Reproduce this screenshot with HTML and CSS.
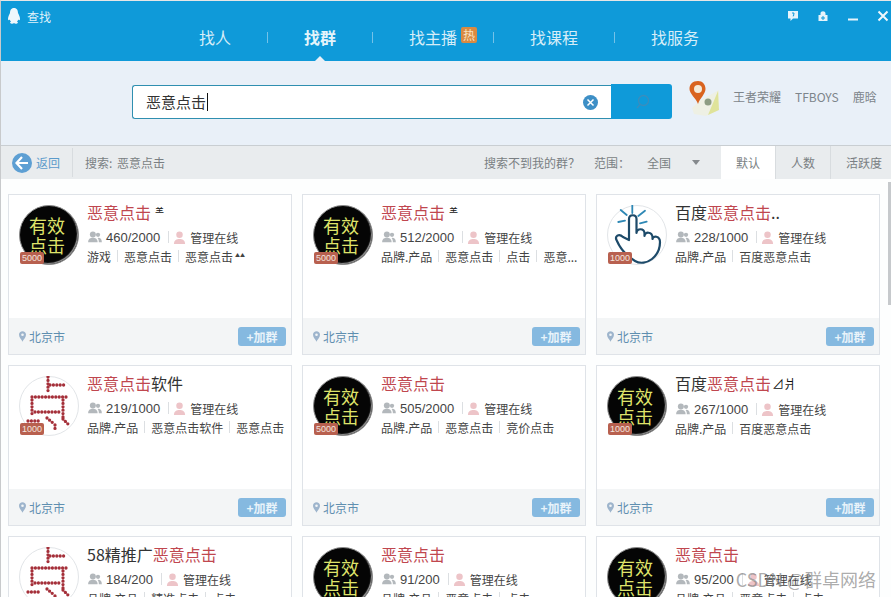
FILE: index.html
```html
<!DOCTYPE html>
<html lang="zh-CN">
<head>
  <meta charset="UTF-8">
  <title>查找</title>
  <link rel="stylesheet" href="styles.css">
</head>
<body>
  <div class="window">
    <header class="topbar">
      <div class="titlebar">
        <div class="app-title">
          <svg class="penguin" width="14" height="16" viewBox="0 0 14 16"><path d="M7 0C4 0 3 2.500 3 5C2 7 1 9 1 11C1 12.500 2 12.500 2.800 11.500C3 12.500 3.500 13 4 13.500C3 14 2.500 15 4 15.500C5.500 16 6.500 15.500 7 15C7.500 15.500 8.500 16 10 15.500C11.500 15 11 14 10 13.500C10.500 13 11 12.500 11.200 11.500C12 12.500 13 12.500 13 11C13 9 12 7 11 5C11 2.500 10 0 7 0Z" fill="#eef7fc"/></svg>
          <span>查找</span>
        </div>
        <div class="win-controls">
          <svg width="12" height="12" viewBox="0 0 12 12"><path d="M1 1H11V8.500H6L3.500 11V8.500H1Z" fill="#e6f4fb"/><path d="M5 3H7L6.500 6H5.800" fill="none" stroke="#0f9ad9" stroke-width="1"/></svg>
          <svg width="12" height="12" viewBox="0 0 12 12"><path d="M3.500 5V3.500C3.500 0.500 8.500 0.500 8.500 3.500V5H10.500V11H1.500V5Z" fill="#e6f4fb"/><path d="M4 8H8M6 6V10" stroke="#0f9ad9" stroke-width="1"/></svg>
          <svg width="12" height="12" viewBox="0 0 12 12"><path d="M1 9.500H11" stroke="#e6f4fb" stroke-width="2"/></svg>
          <svg width="12" height="12" viewBox="0 0 12 12"><path d="M1.500 1.500L10.500 10.500M10.500 1.500L1.500 10.500" stroke="#eef7fc" stroke-width="2"/></svg>
        </div>
      </div>
      <nav class="tabs">
        <a class="tab">找人</a>
        <i class="tab-sep"></i>
        <a class="tab tab-active">找群</a>
        <i class="tab-sep"></i>
        <a class="tab">找主播<b class="hot">热</b></a>
        <i class="tab-sep"></i>
        <a class="tab">找课程</a>
        <i class="tab-sep"></i>
        <a class="tab">找服务</a>
      </nav>
    </header>

    <section class="search-area">
      <div class="search-box">
        <div class="search-input">
          <span class="query">恶意点击</span>
          <svg class="clear" width="15" height="15" viewBox="0 0 15 15"><circle cx="7.500" cy="7.500" r="7.500" fill="#3d8fc6"/><path d="M4.500 4.500L10.500 10.500M10.500 4.500L4.500 10.500" stroke="#fff" stroke-width="1.500"/></svg>
        </div>
        <button class="search-btn">
          <svg width="16" height="16" viewBox="0 0 16 16"><circle cx="9.500" cy="6.500" r="5" fill="none" stroke="#3a8dbd" stroke-width="1.300"/><path d="M6 10.500L3 14" stroke="#3a8dbd" stroke-width="1.300"/></svg>
        </button>
      </div>
      <svg class="map-icon" width="32" height="36" viewBox="0 0 32 36">
        <path d="M3 27L12 19L30 9L29 29L17 35L5 33Z" fill="#eef0e4"/>
        <path d="M19 34L29 10L30 29Z" fill="#dfe39a"/>
        <circle cx="19" cy="21" r="3.500" fill="#8d9c83"/>
        <path d="M9 0C3.500 0 0.500 3.500 0.500 8C0.500 13 7 17 9 23C11 17 16.500 13 16.500 8C16.500 3.500 13.500 0 9 0Z" fill="#d9631f"/>
        <circle cx="9" cy="8" r="4" fill="#f4ead9"/>
      </svg>
      <div class="hot-words">
        <a>王者荣耀</a>
        <a>TFBOYS</a>
        <a>鹿晗</a>
      </div>
    </section>

    <section class="toolbar">
      <a class="back">
        <svg width="20" height="20" viewBox="0 0 20 20"><circle cx="10" cy="10" r="10" fill="#5d9fd3"/><path d="M10 4L4.500 10L10 16M5 10H16" fill="none" stroke="#fff" stroke-width="2.200"/></svg>
        <span>返回</span>
      </a>
      <span class="crumb">搜索: 恶意点击</span>
      <span class="not-found">搜索不到我的群？</span>
      <span class="range">范围：</span>
      <span class="range-value">全国</span>
      <i class="caret"></i>
      <div class="sorts">
        <a class="sort sort-active">默认</a>
        <a class="sort">人数</a>
        <a class="sort">活跃度</a>
      </div>
    </section>

    <main class="results">
      <article class="card">
        <div class="card-body">
          <div class="avatar avatar-dark"><span>有效<br>点击</span><em class="level">5000</em></div>
          <div class="info">
            <h3><mark>恶意点击</mark><small>⺷</small></h3>
            <p class="stats"><svg class="ic-members" viewBox="0 0 16 14"><use href="#members"/></svg><span class="count">460/2000</span><i class="bar"></i><svg class="ic-admin" viewBox="0 0 14 14"><use href="#admin"/></svg>管理在线</p>
            <p class="tags">游戏<i class="bar"></i>恶意点击<i class="bar"></i>恶意点击<small>▲▲</small></p>
          </div>
        </div>
        <div class="card-foot"><span class="city"><svg class="ic-pin" viewBox="0 0 8 12"><use href="#pin"/></svg>北京市</span><button class="join">+加群</button></div>
      </article>

      <article class="card">
        <div class="card-body">
          <div class="avatar avatar-dark"><span>有效<br>点击</span><em class="level">5000</em></div>
          <div class="info">
            <h3><mark>恶意点击</mark><small>⺷</small></h3>
            <p class="stats"><svg class="ic-members" viewBox="0 0 16 14"><use href="#members"/></svg><span class="count">512/2000</span><i class="bar"></i><svg class="ic-admin" viewBox="0 0 14 14"><use href="#admin"/></svg>管理在线</p>
            <p class="tags">品牌.产品<i class="bar"></i>恶意点击<i class="bar"></i>点击<i class="bar"></i>恶意...</p>
          </div>
        </div>
        <div class="card-foot"><span class="city"><svg class="ic-pin" viewBox="0 0 8 12"><use href="#pin"/></svg>北京市</span><button class="join">+加群</button></div>
      </article>

      <article class="card">
        <div class="card-body">
          <div class="avatar avatar-hand">
            <svg width="60" height="60" viewBox="0 0 60 60"><use href="#hand"/></svg>
            <em class="level">1000</em>
          </div>
          <div class="info">
            <h3>百度<mark>恶意点击</mark>..</h3>
            <p class="stats"><svg class="ic-members" viewBox="0 0 16 14"><use href="#members"/></svg><span class="count">228/1000</span><i class="bar"></i><svg class="ic-admin" viewBox="0 0 14 14"><use href="#admin"/></svg>管理在线</p>
            <p class="tags">品牌.产品<i class="bar"></i>百度恶意点击</p>
          </div>
        </div>
        <div class="card-foot"><span class="city"><svg class="ic-pin" viewBox="0 0 8 12"><use href="#pin"/></svg>北京市</span><button class="join">+加群</button></div>
      </article>

      <article class="card">
        <div class="card-body">
          <div class="avatar avatar-dots">
            <svg width="60" height="60" viewBox="0 0 60 60"><use href="#dots"/></svg>
            <em class="level">1000</em>
          </div>
          <div class="info">
            <h3><mark>恶意点击</mark>软件</h3>
            <p class="stats"><svg class="ic-members" viewBox="0 0 16 14"><use href="#members"/></svg><span class="count">219/1000</span><i class="bar"></i><svg class="ic-admin" viewBox="0 0 14 14"><use href="#admin"/></svg>管理在线</p>
            <p class="tags">品牌.产品<i class="bar"></i>恶意点击软件<i class="bar"></i>恶意点击</p>
          </div>
        </div>
        <div class="card-foot"><span class="city"><svg class="ic-pin" viewBox="0 0 8 12"><use href="#pin"/></svg>北京市</span><button class="join">+加群</button></div>
      </article>

      <article class="card">
        <div class="card-body">
          <div class="avatar avatar-dark"><span>有效<br>点击</span><em class="level">5000</em></div>
          <div class="info">
            <h3><mark>恶意点击</mark></h3>
            <p class="stats"><svg class="ic-members" viewBox="0 0 16 14"><use href="#members"/></svg><span class="count">505/2000</span><i class="bar"></i><svg class="ic-admin" viewBox="0 0 14 14"><use href="#admin"/></svg>管理在线</p>
            <p class="tags">品牌.产品<i class="bar"></i>恶意点击<i class="bar"></i>竞价点击</p>
          </div>
        </div>
        <div class="card-foot"><span class="city"><svg class="ic-pin" viewBox="0 0 8 12"><use href="#pin"/></svg>北京市</span><button class="join">+加群</button></div>
      </article>

      <article class="card">
        <div class="card-body">
          <div class="avatar avatar-dark"><span>有效<br>点击</span><em class="level">1000</em></div>
          <div class="info">
            <h3>百度<mark>恶意点击</mark><small class="odd">⊿爿</small></h3>
            <p class="stats"><svg class="ic-members" viewBox="0 0 16 14"><use href="#members"/></svg><span class="count">267/1000</span><i class="bar"></i><svg class="ic-admin" viewBox="0 0 14 14"><use href="#admin"/></svg>管理在线</p>
            <p class="tags">品牌.产品<i class="bar"></i>百度恶意点击</p>
          </div>
        </div>
        <div class="card-foot"><span class="city"><svg class="ic-pin" viewBox="0 0 8 12"><use href="#pin"/></svg>北京市</span><button class="join">+加群</button></div>
      </article>

      <article class="card">
        <div class="card-body">
          <div class="avatar avatar-dots">
            <svg width="60" height="60" viewBox="0 0 60 60"><use href="#dots"/></svg>
          </div>
          <div class="info">
            <h3>58精推广<mark>恶意点击</mark></h3>
            <p class="stats"><svg class="ic-members" viewBox="0 0 16 14"><use href="#members"/></svg><span class="count">184/200</span><i class="bar"></i><svg class="ic-admin" viewBox="0 0 14 14"><use href="#admin"/></svg>管理在线</p>
            <p class="tags">品牌.产品<i class="bar"></i>精准点击<i class="bar"></i>点击</p>
          </div>
        </div>
      </article>

      <article class="card">
        <div class="card-body">
          <div class="avatar avatar-dark"><span>有效<br>点击</span></div>
          <div class="info">
            <h3><mark>恶意点击</mark></h3>
            <p class="stats"><svg class="ic-members" viewBox="0 0 16 14"><use href="#members"/></svg><span class="count">91/200</span><i class="bar"></i><svg class="ic-admin" viewBox="0 0 14 14"><use href="#admin"/></svg>管理在线</p>
            <p class="tags">品牌.产品<i class="bar"></i>恶意点击<i class="bar"></i>点击</p>
          </div>
        </div>
      </article>

      <article class="card">
        <div class="card-body">
          <div class="avatar avatar-dark"><span>有效<br>点击</span></div>
          <div class="info">
            <h3><mark>恶意点击</mark></h3>
            <p class="stats"><svg class="ic-members" viewBox="0 0 16 14"><use href="#members"/></svg><span class="count">95/200</span><i class="bar"></i><svg class="ic-admin" viewBox="0 0 14 14"><use href="#admin"/></svg>管理在线</p>
            <p class="tags">品牌.产品<i class="bar"></i>恶意点击<i class="bar"></i>点击</p>
          </div>
        </div>
      </article>
    </main>

    <div class="scroll-thumb"></div>
    <span class="watermark">CSDN @群卓网络</span>
  </div>

  <!-- shared icons -->
  <svg class="defs" width="0" height="0">
    <defs>
      <g id="members" fill="#b3b8bc">
        <circle cx="5.500" cy="4" r="3.500"/><path d="M0 13C0 9 3 8 5.500 8C8 8 11 9 11 13Z"/>
        <circle cx="11.500" cy="4.500" r="2.500"/><path d="M12 8C14 8 16 9.500 16 13H12.500C12.500 11 12 9 11 8.500Z"/>
      </g>
      <g id="admin" fill="#edc4c8">
        <circle cx="7" cy="4" r="3.500"/><path d="M1 14C1 9.500 4 8.500 7 8.500C10 8.500 13 9.500 13 14Z"/>
      </g>
      <path id="pin" fill="#9db4cc" d="M4 0C1.800 0 0 1.700 0 4C0 7 3 9.500 4 12C5 9.500 8 7 8 4C8 1.700 6.200 0 4 0ZM4 2.500A1.500 1.500 0 1 1 4 5.500A1.500 1.500 0 0 1 4 2.500Z" fill-rule="evenodd"/>
      <g id="hand">
        <path d="M22 35V14C22 9 29.500 9 29.500 14V28C30 23 37 23 37.500 28V31C38 26 45 27 45.500 32V34C46 30 53 31 53 37C53 45 50 50 45 54C40 58 33 59 28 56C20 51 13 43 10 36C7 31 12 28 16 32Z" fill="#fff" stroke="#1d4a69" stroke-width="2.200" stroke-linecap="round" stroke-linejoin="round"/>
        <path d="M25.300 0V8M13.700 5L19.700 10M11.300 17L18 15.700M38 5.700L31.300 11M39.700 16.700L33 18.300" stroke="#2e88b5" stroke-width="1.800" stroke-linecap="round"/>
      </g>
      <g id="dots" fill="none" stroke="#a5303a" stroke-width="3.300" stroke-linecap="round" stroke-dasharray="0 3.400">
        <path d="M29 1V18"/>
        <path d="M31 9H48"/>
        <path d="M13 21H48"/>
        <path d="M13 24V39"/>
        <path d="M44 24V44"/>
        <path d="M16 36H42"/>
        <path d="M28 42L34 47"/>
        <path d="M36 49V55"/>
        <path d="M44 43L50 49"/>
        <path d="M9 45H21"/>
      </g>
    </defs>
  </svg>
</body>
</html>
```

FILE: styles.css
```css
* {
  box-sizing: border-box;
}
html, body {
  margin: 0;
  height: 100%;
  overflow: hidden;
}
body {
  font-family: "Noto Sans CJK SC", "Liberation Sans", sans-serif;
  color: #333;
  background: #fff;
}
a {
  text-decoration: none;
}
.window {
  position: relative;
  width: 891px;
  height: 597px;
  overflow: hidden;
  background: #fdfefe;
  border-top: 1px solid #e6e6e6;
  border-left: 1px solid #c8cacc;
}
.defs {
  position: absolute;
}

/* blue header */
.topbar {
  height: 60px;
  background: #0f9ad9;
  color: #dff1fa;
}
.titlebar {
  display: flex;
  justify-content: space-between;
  height: 23px;
  padding: 7px 2px 0 6px;
}
.app-title {
  display: flex;
  align-items: center;
  gap: 6px;
  height: 16px;
  font-size: 12px;
}
.win-controls {
  display: flex;
  gap: 18px;
  padding-top: 2px;
}
.tabs {
  display: flex;
  align-items: center;
  height: 26px;
  margin-left: 198px;
  font-size: 16px;
}
.tab {
  position: relative;
  color: #d6edf8;
}
.tab-active {
  font-weight: bold;
  color: #e4f4fb;
}
.tab-active::after {
  content: "";
  position: absolute;
  left: 50%;
  bottom: -13px;
  margin-left: -6px;
  border: 6px solid transparent;
  border-top: 0;
  border-bottom-color: #e9f0f8;
}
.tab-sep {
  width: 1px;
  height: 11px;
  margin: 0 36px;
  background: #74c2e8;
}
.hot {
  position: absolute;
  top: 2px;
  right: -20px;
  width: 16px;
  height: 16px;
  border-radius: 2px;
  font-size: 12px;
  font-weight: normal;
  line-height: 16px;
  text-align: center;
  color: #f7e3c2;
  background: #d98a42;
}

/* search row */
.search-area {
  display: flex;
  align-items: flex-start;
  height: 84px;
  padding: 24px 0 0 131px;
  background: #e9f0f8;
}
.search-box {
  display: flex;
  width: 540px;
  height: 34px;
}
.search-input {
  display: flex;
  align-items: center;
  justify-content: space-between;
  width: 479px;
  padding: 0 13px;
  background: #fff;
  border: 1px solid #2f8fb0;
  border-right: 0;
  border-radius: 3px 0 0 3px;
}
.query {
  padding-right: 1px;
  font-size: 15px;
  color: #333;
  border-right: 1px solid #111;
  line-height: 18px;
}
.search-btn {
  display: flex;
  align-items: center;
  justify-content: center;
  width: 61px;
  height: 35px;
  margin-top: -1px;
  padding: 0;
  border: 0;
  border-radius: 0 3px 3px 0;
  background: #0f9ad9;
}
.map-icon {
  margin: -4px 0 0 17px;
}
.hot-words {
  display: flex;
  gap: 14px;
  margin: 4px 0 0 12px;
  font-size: 12px;
  line-height: 16px;
}
.hot-words a {
  color: #7d858b;
}

/* back / sort bar */
.toolbar {
  display: flex;
  align-items: center;
  height: 34px;
  padding-left: 11px;
  font-size: 12px;
  white-space: nowrap;
  color: #7a7f83;
  background: #e9ecee;
  border-top: 1px solid #c9ced2;
}
.toolbar > * {
  flex: none;
}
.back {
  display: flex;
  align-items: center;
  gap: 4px;
  width: 61px;
  height: 29px;
  color: #5b9bcb;
  border-right: 1px solid #d8dcdf;
}
.crumb {
  margin-left: 12px;
  width: 399px;
  word-spacing: 2px;
}
.not-found, .range {
  font-family: "Noto Sans CJK TC", "Liberation Sans", sans-serif;
}
.range {
  margin-left: 14px;
}
.range-value {
  margin-left: 17px;
}
.caret {
  width: 0;
  margin-left: 21px;
  border: 4.500px solid transparent;
  border-top: 5px solid #85898d;
  border-bottom: 0;
}
.sorts {
  display: flex;
  align-self: stretch;
  margin-left: 21px;
}
.sort {
  display: flex;
  flex: none;
  align-items: center;
  padding: 0 15px;
  color: #7a7f83;
  border-right: 1px solid #d8dcdf;
}
.sort-active {
  background: #fff;
}

/* result cards */
.results {
  display: grid;
  grid-template-columns: repeat(3, 284px);
  grid-auto-rows: 161px;
  column-gap: 10px;
  row-gap: 10px;
  padding: 15px 0 0 7px;
}
.card {
  display: flex;
  flex-direction: column;
  background: #fff;
  border: 1px solid #dfe3e8;
}
.card-body {
  display: flex;
  flex: 1;
  padding: 10px 0 0 10px;
}
.avatar {
  position: relative;
  flex: none;
  width: 60px;
  height: 60px;
  border-radius: 50%;
}
.avatar-dark {
  display: flex;
  align-items: center;
  justify-content: center;
  padding-right: 4px;
  text-align: center;
  font-size: 18px;
  line-height: 20px;
  color: #dfe36a;
  background: #050505;
  border: 1px solid #8a8a8a;
  box-shadow: inset -1px -1px 1px #9a9a9a;
}
.avatar-hand, .avatar-dots {
  background: #fff;
  border: 1px solid #e2e5e8;
}
.avatar-hand svg, .avatar-dots svg {
  position: absolute;
  top: -1px;
  left: -1px;
}
.level {
  position: absolute;
  left: 0;
  bottom: 0;
  width: 24px;
  height: 12px;
  border-radius: 2px;
  font-family: "Liberation Sans", sans-serif;
  font-size: 9px;
  font-style: normal;
  line-height: 12px;
  text-align: center;
  color: #f3e5df;
  background: #b8604f;
}
.info {
  min-width: 0;
  margin-left: 8px;
}
.info h3 {
  margin: -1px 0 0;
  font-size: 16px;
  font-weight: normal;
  line-height: 16px;
  color: #333;
  white-space: nowrap;
}
.info h3 small {
  margin-left: 4px;
  font-size: 9px;
  color: #111;
  vertical-align: 4px;
}
.info h3 .odd {
  margin-left: 1px;
  font-size: 12px;
  vertical-align: 1px;
}
mark {
  color: #c0474f;
  background: none;
}
.stats, .tags {
  display: flex;
  align-items: center;
  margin: 0;
  font-size: 12px;
  white-space: nowrap;
  color: #444;
}
.stats {
  height: 18px;
  margin-top: 8px;
}
.tags {
  height: 18px;
  margin-top: 1px;
}
.tags small {
  margin: -3px 0 0 2px;
  font-size: 5px;
}
.count {
  font-family: "Liberation Sans", sans-serif;
  font-size: 13px;
}
.ic-members {
  width: 14px;
  height: 12px;
  margin: 0 4px 0 1px;
}
.ic-admin {
  width: 13px;
  height: 13px;
  margin-right: 4px;
}
.bar {
  width: 1px;
  height: 12px;
  margin: 0 6px;
  background: #dcdfe2;
}
.stats .bar {
  margin: 0 4px 0 8px;
}
.card-foot {
  display: flex;
  align-items: center;
  justify-content: space-between;
  height: 36px;
  padding: 0 5px 0 10px;
  background: #f3f5f6;
}
.city {
  display: flex;
  align-items: center;
  gap: 3px;
  font-size: 12px;
  color: #5f8fb0;
}
.ic-pin {
  width: 7px;
  height: 11px;
}
.join {
  width: 48px;
  height: 19px;
  padding: 0;
  border: 0;
  border-radius: 3px;
  font-family: inherit;
  font-size: 12px;
  font-weight: bold;
  line-height: 19px;
  color: #e8f3fa;
  background: #85b9e0;
}

/* things lying over the list */
.scroll-thumb {
  position: absolute;
  top: 181px;
  right: 0;
  width: 3px;
  height: 123px;
  background: #c6c9cc;
}
.watermark {
  position: absolute;
  right: 15px;
  bottom: 6px;
  font-size: 18px;
  line-height: 24px;
  white-space: nowrap;
  color: rgba(125, 125, 125, 0.65);
}
```
